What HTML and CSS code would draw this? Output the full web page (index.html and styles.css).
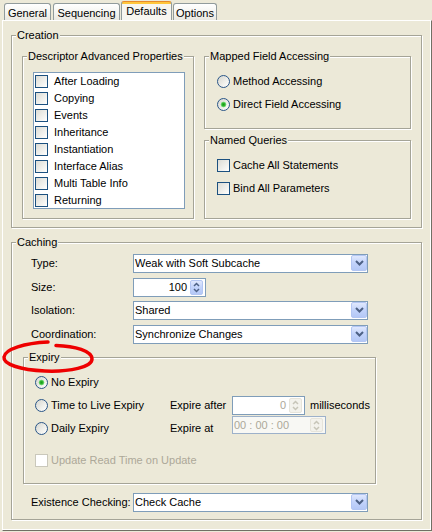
FILE: index.html
```html
<!DOCTYPE html>
<html>
<head>
<meta charset="utf-8">
<title>Defaults</title>
<link rel="stylesheet" href="styles.css">
</head>
<body>
<div class="tabs">
  <div class="tab t-general">General</div>
  <div class="tab t-seq">Sequencing</div>
  <div class="tab t-def sel">Defaults</div>
  <div class="tab t-opt">Options</div>
</div>
<div class="panel">
  <div class="grp creation">
    <div class="ttl">Creation</div>
    <div class="creation-body">
      <div class="grp desc">
        <div class="ttl">Descriptor Advanced Properties</div>
        <div class="list">
          <div class="li"><span class="cb"></span><span>After Loading</span></div>
          <div class="li"><span class="cb"></span><span>Copying</span></div>
          <div class="li"><span class="cb"></span><span>Events</span></div>
          <div class="li"><span class="cb"></span><span>Inheritance</span></div>
          <div class="li"><span class="cb"></span><span>Instantiation</span></div>
          <div class="li"><span class="cb"></span><span>Interface Alias</span></div>
          <div class="li"><span class="cb"></span><span>Multi Table Info</span></div>
          <div class="li"><span class="cb"></span><span>Returning</span></div>
        </div>
      </div>
      <div class="rcol">
        <div class="grp mapped">
          <div class="ttl">Mapped Field Accessing</div>
          <div class="opt"><span class="rb"></span><span>Method Accessing</span></div>
          <div class="opt"><span class="rb on"></span><span>Direct Field Accessing</span></div>
        </div>
        <div class="grp named">
          <div class="ttl">Named Queries</div>
          <div class="opt"><span class="cb"></span><span>Cache All Statements</span></div>
          <div class="opt"><span class="cb"></span><span>Bind All Parameters</span></div>
        </div>
      </div>
    </div>
  </div>

  <div class="grp caching">
    <div class="ttl">Caching</div>
    <div class="frow">
      <span class="flbl">Type:</span>
      <div class="combo"><span class="cv">Weak with Soft Subcache</span><span class="cbtn"><svg width="9" height="6" viewBox="0 0 9 6"><path d="M1 1 L4.5 4.5 L8 1" fill="none" stroke="#4d6185" stroke-width="2"/></svg></span></div>
    </div>
    <div class="frow">
      <span class="flbl">Size:</span>
      <div class="spin size"><span class="sv">100</span><span class="sbtn"><svg width="7" height="13" viewBox="0 0 7 13"><path d="M1 5 L3.5 2.5 L6 5 M1 8 L3.5 10.5 L6 8" fill="none" stroke="#4d6185" stroke-width="1.5"/></svg></span></div>
    </div>
    <div class="frow r3">
      <span class="flbl">Isolation:</span>
      <div class="combo"><span class="cv">Shared</span><span class="cbtn"><svg width="9" height="6" viewBox="0 0 9 6"><path d="M1 1 L4.5 4.5 L8 1" fill="none" stroke="#4d6185" stroke-width="2"/></svg></span></div>
    </div>
    <div class="frow">
      <span class="flbl">Coordination:</span>
      <div class="combo"><span class="cv">Synchronize Changes</span><span class="cbtn"><svg width="9" height="6" viewBox="0 0 9 6"><path d="M1 1 L4.5 4.5 L8 1" fill="none" stroke="#4d6185" stroke-width="2"/></svg></span></div>
    </div>

    <div class="grp expiry">
      <div class="ttl">Expiry</div>
      <div class="erow">
        <div class="ecell"><span class="rb on"></span><span>No Expiry</span></div>
      </div>
      <div class="erow">
        <div class="ecell"><span class="rb"></span><span>Time to Live Expiry</span></div>
        <span class="elbl">Expire after</span>
        <div class="spin dis ms"><span class="sv">0</span><span class="sbtn"><svg width="7" height="13" viewBox="0 0 7 13"><path d="M1 5 L3.5 2.5 L6 5 M1 8 L3.5 10.5 L6 8" fill="none" stroke="#c7c5b8" stroke-width="1.5"/></svg></span></div>
        <span class="unit">milliseconds</span>
      </div>
      <div class="erow">
        <div class="ecell"><span class="rb"></span><span>Daily Expiry</span></div>
        <span class="elbl">Expire at</span>
        <div class="spin dis tm"><span class="sv">00 : 00 : 00</span><span class="sbtn"><svg width="7" height="13" viewBox="0 0 7 13"><path d="M1 5 L3.5 2.5 L6 5 M1 8 L3.5 10.5 L6 8" fill="none" stroke="#c7c5b8" stroke-width="1.5"/></svg></span></div>
      </div>
      <div class="erow upd"><span class="cb dis"></span><span>Update Read Time on Update</span></div>
    </div>

    <div class="frow exist">
      <span class="flbl">Existence Checking:</span>
      <div class="combo"><span class="cv">Check Cache</span><span class="cbtn"><svg width="9" height="6" viewBox="0 0 9 6"><path d="M1 1 L4.5 4.5 L8 1" fill="none" stroke="#4d6185" stroke-width="2"/></svg></span></div>
    </div>
  </div>
</div>

<svg class="mark" width="432" height="532" viewBox="0 0 432 532">
  <path d="M56 345.5 C75 346 92 351 92 359 C92 367 70 372 45 371 C20 370 3 364 4 357 C5 349 25 343 48 342" fill="none" stroke="#ee0000" stroke-width="3.5" stroke-linecap="round"/>
</svg>
</body>
</html>
```

FILE: styles.css
```css
* { box-sizing: border-box; }
html, body { margin: 0; padding: 0; }
body {
  width: 432px;
  height: 532px;
  overflow: hidden;
  position: relative;
  background: #ece9d8;
  font-family: "Liberation Sans", Arial, sans-serif;
  font-size: 11px;
  line-height: 13px;
  color: #000;
}

/* tabs */
.tabs { display: flex; align-items: flex-start; height: 20px; padding-left: 4px; }
.tab {
  margin-top: 3px;
  height: 17px;
  padding-top: 3px;
  border: 1px solid #919b9c;
  border-bottom: 0;
  border-radius: 3px 3px 0 0;
  background: linear-gradient(#ffffff, #f4f4f0 55%, #e9e8e1);
  text-align: center;
  white-space: nowrap;
}
.t-general { width: 47px; margin-right: 2px; }
.t-seq { width: 67px; margin-right: 1px; }
.t-def { width: 51px; margin-right: 1px; }
.t-opt { width: 44px; }
.tab.sel {
  margin-top: 1px;
  height: 19px;
  border-top-color: #e68b2c;
  background: linear-gradient(#ffc73c 0 2px, #f7f6f0 2px);
}

/* panel */
.panel {
  margin-left: 2px;
  width: 430px;
  height: 511px;
  border: 1px solid;
  border-color: #ffffff #716f64 #716f64 #ffffff;
  box-shadow: inset -1px -1px 0 #ffffff;
  padding: 14px 9px 0 8px;
}

/* titled etched group */
.grp {
  --pl: 0px;
  border: 1px solid #a5a497;
  box-shadow: inset 1px 1px 0 #ffffff, 1px 1px 0 #ffffff;
  padding-left: var(--pl);
}
.ttl {
  width: max-content;
  margin: -7px 0 0 calc(4px - var(--pl));
  padding: 0 1px;
  background: #ece9d8;
  white-space: nowrap;
}

.creation { --pl: 10px; height: 193px; padding-right: 10px; }
.creation-body { display: flex; gap: 10px; margin-top: 14px; height: 163px; }
.desc { --pl: 10px; width: 172px; }
.list {
  margin-top: 9px;
  width: 152px;
  height: 137px;
  border: 1px solid #7f9db9;
  background: #fff;
  overflow: hidden;
}
.li { display: flex; align-items: center; gap: 6px; height: 17px; padding-left: 1px; }

.rcol { width: 207px; display: flex; flex-direction: column; }
.mapped { --pl: 12px; height: 73px; }
.named { --pl: 12px; height: 79px; margin-top: 11px; }
.opt { display: flex; align-items: center; gap: 3px; height: 23px; }
.ttl + .opt { margin-top: 7px; }

/* checkbox & radio */
.cb {
  flex: none;
  width: 13px;
  height: 13px;
  border: 1px solid #1c5180;
  background: linear-gradient(135deg, #dcdcd5, #f4f4f1 70%, #ffffff);
}
.cb.dis { border-color: #cac8bb; background: #ffffff; }
.rb {
  flex: none;
  width: 13px;
  height: 13px;
  border-radius: 50%;
  border: 1px solid #2a5688;
  background: linear-gradient(135deg, #d6d6cf, #f2f2ee 65%, #ffffff);
}
.rb.on {
  background:
    radial-gradient(circle, #1a9a1a 0, #2fb52f 1.5px, #7fdc7f 2.5px, rgba(255,255,255,0) 3.2px),
    linear-gradient(135deg, #d6d6cf, #f2f2ee 65%, #ffffff);
}

/* caching */
.caching { --pl: 11px; height: 278px; margin-top: 14px; }
.frow { display: flex; align-items: center; height: 19px; margin-top: 5px; padding-left: 8px; }
.frow.r3 { margin-top: 4px; }
.frow.exist { margin-top: 9px; }
.flbl { width: 102px; white-space: nowrap; }
.combo {
  display: flex;
  width: 235px;
  height: 19px;
  border: 1px solid #7f9db9;
  background: #fff;
}
.cv { flex: 1; padding-left: 1px; line-height: 17px; white-space: nowrap; }
.cbtn {
  width: 16px;
  height: 16px;
  border: 1px solid #b3c6f3;
  border-radius: 2px;
  background: linear-gradient(#e0e8fd, #c2d3fb 50%, #b4c8f6);
  display: flex;
  align-items: center;
  justify-content: center;
}

.spin { display: flex; border: 1px solid #7f9db9; background: #fff; }
.spin.size { width: 73px; height: 19px; }
.sv { flex: 1; text-align: right; padding-right: 2px; line-height: 17px; white-space: nowrap; }
.sbtn {
  width: 13px;
  margin: 1px 2px 1px 1px;
  border: 1px solid #b3c6f3;
  border-radius: 2px;
  background: linear-gradient(#e0e8fd, #c2d3fb 50%, #b4c8f6);
  display: flex;
  align-items: center;
  justify-content: center;
}
.spin.dis .sv { color: #aca899; }
.spin.dis .sbtn { border-color: #e6e4da; background: #f3f2ec; }
.spin.ms { width: 73px; height: 19px; }
.spin.tm {
  width: 94px;
  height: 18px;
  align-self: flex-start;
  margin-top: -1px;
  border-color: #9db1ca;
  background: #f8f8f4;
}
.spin.tm .sv { text-align: left; padding-left: 1px; line-height: 16px; }

/* expiry */
.expiry { --pl: 11px; width: 353px; height: 127px; margin-top: 13px; }
.erow { display: flex; align-items: center; height: 23px; }
.ttl + .erow { margin-top: 7px; }
.ecell { display: flex; align-items: center; gap: 3px; width: 135px; }
.elbl { width: 62px; white-space: nowrap; }
.unit { margin-left: 5px; }
.erow.upd { margin-top: 9px; gap: 3px; color: #aca899; }

.mark { position: absolute; left: 0; top: 0; pointer-events: none; }
```
